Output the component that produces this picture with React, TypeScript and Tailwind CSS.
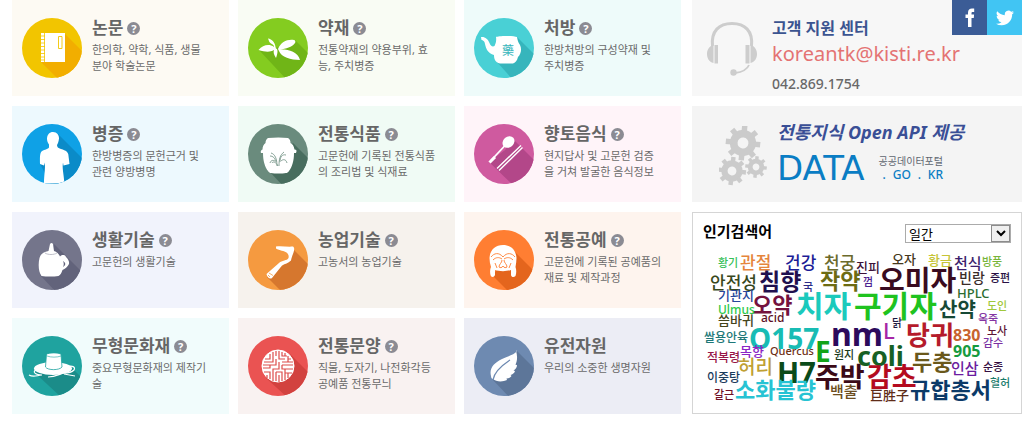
import { ReactNode } from "react";

type Topic = {
  title: string;
  lines: string[];
  card: string;
  disc: string;
  shade: string;
  shadow: string;
  help: boolean;
  art: ReactNode;
};

const topics: Topic[] = [
  {
    title: "논문",
    lines: ["한의학, 약학, 식품, 생물", "분야 학술논문"],
    card: "bg-[#fdfaf3]",
    disc: "#f2c500",
    shade: "#f2ae00",
    shadow: "M43 16 62 35V62H37L19 44Z",
    help: true,
    art: (
      <>
        <path fill="#fff" d="M19 15h24v29H19z" />
        <path stroke="#f2c500" fill="none" d="M22.5 15v29M18 18h5M18 21.500h5M18 25h5M18 28.500h5M18 32h5M18 35.500h5M18 39h5M18 42h5" strokeWidth=".8" />
        <path stroke="#f2c500" fill="none" strokeWidth=".9" d="M36.500 18.500h3.500v12h-3.500z" />
      </>
    ),
  },
  {
    title: "약재",
    lines: ["전통약재의 약용부위, 효", "능, 주치병증"],
    card: "bg-[#f9fcf4]",
    disc: "#84cc20",
    shade: "#70b517",
    shadow: "M11 32 28 30 47 22 62 37V62H39Z",
    help: true,
    art: (
      <path
        fill="#fff"
        d="M10.500 32C15 27 21 25.500 26 29c0-2-1-2.500-3-3.500-2-1-2-3-3-5 4 .5 7 4 7.500 8.500l.5 1.500c2 .5 2 4 0 9.500-2-3-3-6-2-8-4 2.500-9 2-15.500 0zM30 31c3-7 9-10 16-9 1 0 2 2 1 3-3 4-9 6-15 6.500C39 31 50 33 52 42c-9 0-19-3-21-9l-1-2z"
      />
    ),
  },
  {
    title: "처방",
    lines: ["한방처방의 구성약재 및", "주치병증"],
    card: "bg-[#eefbfa]",
    disc: "#49d0d5",
    shade: "#36b5bc",
    shadow: "M43 19 62 38V62H39L23 44Z",
    help: true,
    art: (
      <>
        <path
          fill="#fff"
          d="M7 19c4-.5 7 2 8.500 6 1 3 3 4 5 3 1.500-3 2-6 1.500-9 2-1.500 18-1.500 21 0 .5 3 1 5 3 8 2 4 1 9-2 12-1 4-3 6-5 6.500H26c-5-1-6-5-6-8.500-6-2-8-6-9-11-.5-3-2-4-3.500-4z"
        />
        <text x="34" y="37" fontSize="12" textAnchor="middle" fill="#36b5bc" fontFamily="Noto Sans CJK KR">
          藥
        </text>
      </>
    ),
  },
  {
    title: "병증",
    lines: ["한방병증의 문헌근거 및", "관련 양방병명"],
    card: "bg-[#edf9fe]",
    disc: "#0fa1e6",
    shade: "#0b8bc8",
    shadow: "M36 10 62 36V62H30L18 40Z",
    help: true,
    art: (
      <path
        fill="#fff"
        d="M31 8c4 0 6 3 6 6.500-.3 3-1 5-2 6.500 0 2 1 3 4 4 5 1.500 7.500 3 7.500 7l1 8-6 1.500-.5-3c-1 5 .5 10 1.500 21H22c0-9 1.500-14 .8-21l-.8 3-4-1.500c0-5-.5-10 1.500-12.500 1.500-1.500 6-2 7.500-4v-3c-1.500-2-2-4-2-6 .3-4 2.500-6.500 6-6.500z"
      />
    ),
  },
  {
    title: "전통식품",
    lines: ["고문헌에 기록된 전통식품", "의 조리법 및 식재료"],
    card: "bg-[#f0fbf5]",
    disc: "#6a8b7d",
    shade: "#486d5e",
    shadow: "M45 19 62 36V62H35L22 48Z",
    help: true,
    art: (
      <>
        <path
          fill="#fff"
          d="M20 14c7-.8 14-.8 20 0 2 1 2.500 3 2.500 5 2 1 3.500 3 4 6.500 2 0 2.500 1 1.500 3.500h-2c0 8-2 14-5 18-1 1.500-2 2-3 2-4 .8-11 .8-15 0-1 0-2-.5-3-2-3-4-5-10-5-18h-2c-.7-1.500 0-3 1.500-3.500 0-3 1-5 3-6.500 0-2 .7-4 2.500-5z"
        />
        <path
          fill="none"
          stroke="#6a8b7d"
          strokeWidth=".8"
          d="M29 42c0-7-2-12-6-13M28 38c-1-4-3-6-6-6M27 37c-2-1-4-1-5 2M31 42c0-7 1-11 5-14M32 38c0-5 2-8 6-7M33 37c2-2 5-2 6 2M30 42c-2-4-5-5-6-3"
        />
      </>
    ),
  },
  {
    title: "향토음식",
    lines: ["현지답사 및 고문헌 검증", "을 거쳐 발굴한 음식정보"],
    card: "bg-[#fff4f9]",
    disc: "#cf5a9f",
    shade: "#b34789",
    shadow: "M38 14 62 38V62H40L15 38 31 26 30 28Z",
    help: true,
    art: (
      <>
        <ellipse cx="34.500" cy="18" rx="6.500" ry="5.300" transform="rotate(-42 34.500 18)" fill="#fff" />
        <path d="M31 21.500 16.500 37" stroke="#fff" strokeWidth="1.800" />
        <path d="M21 33 15.500 38.500" stroke="#fff" strokeWidth="3" />
        <path d="M47 21.500 23 44.500M48.500 23.500 25 46.500" stroke="#fff" strokeWidth="1.400" />
      </>
    ),
  },
  {
    title: "생활기술",
    lines: ["고문헌의 생활기술"],
    card: "bg-[#f1f3fc]",
    disc: "#74758b",
    shade: "#62637b",
    shadow: "M32 14 62 44V62H34L18 45Z",
    help: true,
    art: (
      <>
        <path
          fill="#fff"
          fillRule="evenodd"
          d="M28 14c1-1.500 2-1.500 3 0l1 7c3 1 5 3 6 5.500 2-2 5-2 6 .5 2 2 3.500 4 3 7-1.500 3-4 5-6.500 6-1 3-2 5-4 6-5 .8-12 .8-17 0-3-4-3.500-12-2-18 1-4 4-6 9-7zM41 31c1 2 1 4 0 6 3-2 3-4 0-6z"
        />
        <path d="M23 23c3 2 9 2 12 0" fill="none" stroke="#a5a6b5" strokeWidth=".7" />
      </>
    ),
  },
  {
    title: "농업기술",
    lines: ["고농서의 농업기술"],
    card: "bg-[#f6f2ed]",
    disc: "#f59a40",
    shade: "#d6772e",
    shadow: "M46 20 62 36V62H34L19 47 42 30Z",
    help: true,
    art: (
      <>
        <path
          fill="#fff"
          d="M28 16.500c6-.5 12 .5 17 0 2 1.500 1 4 .5 6-1 3-2 5-2.500 8-3 3-6 3-9 5L24 48c-2 1.500-5-.5-5.500-4L31 33c3-3 8-2 9.500-5 .5-2 0-4-2-5.500-2-1.500-7-2-10.500-4z"
        />
        <path d="m21 43 4 2.500M20 45l2 2" stroke="#f59a40" strokeWidth=".8" />
      </>
    ),
  },
  {
    title: "전통공예",
    lines: ["고문헌에 기록된 공예품의", "재료 및 제작과정"],
    card: "bg-[#fef4ee]",
    disc: "#ff7e32",
    shade: "#e4651d",
    shadow: "M41 22 62 43V62H35L18 45Z",
    help: true,
    art: (
      <>
        <path
          fill="#fff"
          d="M29 15c8 0 13 5 13.500 13 0 3-.5 6-1 9 1 3 1 6 0 9-1.500 1.500-4 1.500-4.500-1v-5c-4 1.500-12 1.500-16 0v5c-.8 2.500-4 2.500-4.500 0-.7-3-.5-6 .5-8-1-3-1.500-6-1.500-9 .5-8 5.500-13 13.500-13z"
        />
        <path
          fill="none"
          stroke="#ff7e32"
          strokeWidth=".9"
          d="M17 27c3-4 8-5 12 0 4-5 9-4 12 0M19 30c3-3 6-3 9-1M39 30c-3-3-6-3-9-1M28 30c0 3-3 4-3 7 1 1 3 1 4-1 1 2 3 2 4 1 0-3-3-4-3-7M21 33l2 5M37 33l-2 5"
        />
      </>
    ),
  },
  {
    title: "무형문화재",
    lines: ["중요무형문화재의 제작기", "술"],
    card: "bg-[#f1fcfc]",
    disc: "#1fa39f",
    shade: "#1b8c89",
    shadow: "M49 31 62 44V62H40L12 36Z",
    help: true,
    art: (
      <>
        <ellipse cx="31" cy="32.500" rx="19" ry="6.500" fill="#fff" />
        <path fill="#fff" stroke="#1fa39f" strokeWidth=".8" d="m24.500 18-1 13c2 3.500 14 3.500 16.500 0l-1-13c-3-1.500-11-1.500-14.500 0z" />
        <path d="M25 20c4 1.500 10 1.500 14 0" fill="none" stroke="#1fa39f" strokeWidth=".6" />
        <path
          fill="none"
          stroke="#fff"
          strokeWidth="1.200"
          d="M45 31c5-2 9 0 7 3-2 2-6 3-10 3-5 1-8 4-16 4M15 33c-6 3-1 6 5 6-5 0-8 3-13 0M42 38l11 2"
        />
      </>
    ),
  },
  {
    title: "전통문양",
    lines: ["직물, 도자기, 나전화각등", "공예품 전통무늬"],
    card: "bg-[#f9f2f1]",
    disc: "#ea5352",
    shade: "#d2423f",
    shadow: "M42 18 62 38V62H40L18 42Z",
    help: true,
    art: (
      <>
        <circle cx="30" cy="30" r="16" fill="#fff" stroke="#fff" />
        <path
          fill="none"
          stroke="#dc4c4a"
          strokeWidth="1.200"
          d="M22 18v5h-5M25 16v10h-9M28 15v5M28 23v6H15M31 15v8h6M34 16v4h5M37 17v3M34 26h11M40 20v6M43 23h-3M31 26v7h-6v4M15 32h7v-3M16 36h6v7M25 34v11M28 36v9M19 39v3M28 36h6v9M31 39v7M34 29h11M34 29v4h11M37 33v11M37 37h7M40 37v5"
        />
      </>
    ),
  },
  {
    title: "유전자원",
    lines: ["우리의 소중한 생명자원"],
    card: "bg-[#ecedf5]",
    disc: "#6e8ab1",
    shade: "#5d7699",
    shadow: "M43 15 62 34V62H36L19 44Z",
    help: false,
    art: (
      <>
        <path
          fill="#fff"
          d="M43 15c-3 4-9 5-15 8-8 4-13 9-11 17 0 2 1 3 2 3 3 3 10 3 14 1l-.5-1.500c2 0 4-1 5-2.500l-1-1c2-.5 4-2 4.500-4l-1.500-.5c2-1 3.500-3 3.500-5.500l-1.500-.2c2-4 2-9 .5-14.300z"
        />
        <path d="M19 44c1-8 8-14 17-20" fill="none" stroke="#6e8ab1" strokeWidth="1.300" />
      </>
    ),
  },
];

type Word = [text: string, x: number, y: number, size: number, color: string, bold?: boolean];

// Left edge and vertical centre of each word inside the cloud panel.
const words: Word[] = [
  ["황기", 26, 50, 11, "#35c058"],
  ["관절", 48, 50, 17, "#e5853c"],
  ["건강", 93, 50, 17, "#1c1c96"],
  ["천궁", 132, 50, 17, "#6b6a2c"],
  ["진피", 164, 55, 13, "#3c1238"],
  ["오자", 200, 47, 13, "#46381c"],
  ["황금", 236, 48, 13, "#c6c437"],
  ["천식", 262, 51, 15, "#3c1f6c"],
  ["방풍", 290, 49, 11, "#78b53a"],
  ["안전성", 18, 70, 17, "#38481c"],
  ["침향", 67, 69, 23, "#1f104f", true],
  ["국", 111, 74, 11, "#2c2c88"],
  ["작약", 128, 68, 22, "#6d6b12", true],
  ["껌", 171, 69, 11, "#4c2290"],
  ["오미자", 187, 68, 28, "#390b20", true],
  ["빈랑", 267, 66, 14, "#3a2c28"],
  ["증편", 298, 65, 11, "#281044"],
  ["HPLC", 265, 81, 13, "#2b6c30"],
  ["기관지", 26, 83, 13, "#27479a"],
  ["오약", 60, 92, 22, "#74123e", true],
  ["치자", 104, 94, 30, "#1bcabc", true],
  ["구기자", 162, 94, 30, "#1fc31f", true],
  ["산약", 247, 98, 20, "#174936", true],
  ["도인", 295, 93, 11, "#a0c83b"],
  ["옥죽", 286, 106, 11, "#8535a3"],
  ["Ulmus", 26, 98, 12, "#2dc94a"],
  ["씀바귀", 26, 108, 13, "#45451c"],
  ["acid", 69, 106, 12, "#5c0f24"],
  ["닭", 200, 110, 11, "#1c1840"],
  ["쌀용안육", 12, 126, 12, "#1d7878"],
  ["O157", 57, 126, 28, "#18bcb4", true],
  ["nm", 139, 122, 32, "#2c0a5c", true],
  ["L", 191, 118, 22, "#a626a6"],
  ["당귀", 214, 123, 26, "#b51b2b", true],
  ["830", 261, 123, 16, "#c8642f", true],
  ["노사", 295, 118, 11, "#5e1636"],
  ["감수", 291, 130, 11, "#7b30a2"],
  ["905", 261, 139, 16, "#169b40", true],
  ["목향", 48, 139, 13, "#8b25c5"],
  ["Quercus", 78, 138, 11, "#6e3014"],
  ["E", 123, 139, 28, "#13a317", true],
  ["원지", 142, 142, 11, "#1c3b1c"],
  ["coli", 165, 143, 27, "#176024", true],
  ["두충", 220, 149, 22, "#6a581b", true],
  ["인삼", 259, 156, 15, "#6b1ca0"],
  ["순종", 291, 154, 11, "#340e40"],
  ["적복령", 15, 146, 12, "#971546"],
  ["허리", 46, 155, 19, "#bfa033"],
  ["H7", 85, 159, 29, "#0b4b19", true],
  ["주박", 123, 164, 27, "#3b0a17", true],
  ["감초", 175, 164, 27, "#b40b1f", true],
  ["이중탕", 15, 166, 12, "#1b3b5c"],
  ["갈근", 22, 182, 11, "#700f25"],
  ["소화불량", 43, 177, 22, "#27c3d3", true],
  ["백출", 138, 179, 15, "#6d4e20"],
  ["巨胜子", 178, 183, 13, "#5f2c18"],
  ["규합총서", 218, 177, 22, "#0b3a68", true],
  ["혈허", 298, 170, 11, "#1a7b6c"],
];

function Disc({ topic, id }: { topic: Topic; id: string }) {
  return (
    <svg viewBox="0 0 60 60" className="size-15 shrink-0" aria-hidden="true">
      <clipPath id={id}>
        <circle cx="30" cy="30" r="30" />
      </clipPath>
      <g clipPath={`url(#${id})`}>
        <path d="M0 0h60v60H0z" fill={topic.disc} />
        <path d={topic.shadow} fill={topic.shade} />
        {topic.art}
      </g>
    </svg>
  );
}

function TopicCard({ topic, id }: { topic: Topic; id: string }) {
  return (
    <article className={`flex h-24 items-start gap-2.5 pt-[18px] pl-2.5 ${topic.card}`}>
      <Disc topic={topic} id={id} />
      <div className="min-w-0">
        <div className="flex h-5 items-center gap-1">
          <h2 className="text-[17px] leading-5 font-bold whitespace-nowrap text-[#666]">{topic.title}</h2>
          {topic.help && (
            <button
              type="button"
              aria-label={`${topic.title} 도움말`}
              className="flex size-[13px] items-center justify-center rounded-full bg-[#8b8b93] text-[11px] leading-none font-bold text-white"
            >
              ?
            </button>
          )}
        </div>
        <p className="mt-1 text-[11px] leading-4 whitespace-nowrap text-[#6a6a6a]">
          {topic.lines.map((line) => (
            <span key={line} className="block">
              {line}
            </span>
          ))}
        </p>
      </div>
    </article>
  );
}

function Headset() {
  return (
    <svg viewBox="0 0 50 54" className="h-[54px] w-[50px] shrink-0" fill="#cdcdcd" aria-hidden="true">
      <path d="M5.500 24C4 9 12 1.500 25 1.500S46 9 44.500 24" fill="none" stroke="#cdcdcd" strokeWidth="3" />
      <path d="M6.500 23v18C2 40 0 36 0 32s2-8 6.500-9zM7.500 23H11v18.500H7.500zM43.500 23v18c4.500-1 6.500-5 6.500-9s-2-8-6.500-9zM38.500 23h4v18.500h-4z" />
      <path d="M42 43c-2 5-7 7-14 8" fill="none" stroke="#cdcdcd" strokeWidth="1.800" />
      <circle cx="26.500" cy="50.500" r="3.200" />
    </svg>
  );
}

function Gear({ x, y, r }: { x: number; y: number; r: number }) {
  return (
    <g transform={`translate(${x} ${y}) rotate(6)`}>
      <circle r={r * 0.58} fill="none" stroke="#cbcbcb" strokeWidth={r * 0.48} />
      {[0, 45, 90, 135, 180, 225, 270, 315].map((a) => (
        <rect key={a} x={-r * 0.17} y={-r * 1.08} width={r * 0.34} height={r * 0.4} fill="#cbcbcb" transform={`rotate(${a})`} />
      ))}
    </g>
  );
}

function SupportPanel() {
  return (
    <section className="flex h-24 items-start bg-[#f7f7f7] pl-[15px]">
      <div className="pt-[22px]">
        <Headset />
      </div>
      <div className="ml-[15px] min-w-0 flex-1 pt-[18px]">
        <h2 className="text-base leading-5 font-bold text-[#3b5490]">고객 지원 센터</h2>
        <a href="mailto:koreantk@kisti.re.kr" className="mt-0.5 block text-xl leading-7 text-[#e47373]">
          koreantk@kisti.re.kr
        </a>
        <p className="mt-1.5 text-sm leading-5 font-medium text-[#686868]">042.869.1754</p>
      </div>
      <nav className="-ml-[70px] flex">
        <a href="#facebook" aria-label="Facebook" className="flex size-[35px] items-center justify-center bg-[#3b5c96]">
          <svg viewBox="0 0 35 35" className="size-[35px]" fill="#fff" aria-hidden="true">
            <path d="M16 27v-9h-2.500v-3.500H16v-2c0-2.700 1.600-4 4-4h2.200V12h-1.500c-.9 0-1.200.4-1.200 1.200v1.300h2.600l-.3 3.500h-2.300v9z" />
          </svg>
        </a>
        <a href="#twitter" aria-label="Twitter" className="flex size-[35px] items-center justify-center bg-[#41c5f3]">
          <svg viewBox="0 0 24 24" className="size-[18px]" fill="#fff" aria-hidden="true">
            <path d="M23.950 4.570a10 10 0 0 1-2.820.770 4.960 4.960 0 0 0 2.160-2.720c-.950.550-2 .950-3.130 1.180a4.920 4.920 0 0 0-8.380 4.480C7.690 8.090 4.070 6.130 1.640 3.160a4.920 4.920 0 0 0 1.520 6.570 4.900 4.900 0 0 1-2.230-.610v.060a4.920 4.920 0 0 0 3.950 4.830 5 5 0 0 1-2.210.080 4.940 4.940 0 0 0 4.600 3.420A9.870 9.870 0 0 1 0 19.540a14 14 0 0 0 7.550 2.210c9.050 0 14-7.500 14-13.980 0-.210 0-.420-.020-.630a9.940 9.940 0 0 0 2.420-2.570z" />
          </svg>
        </a>
      </nav>
    </section>
  );
}

function OpenApiPanel() {
  return (
    <a href="#open-api" className="flex h-24 items-start bg-[#f4f4f4] pl-[27px]">
      <svg viewBox="0 0 48 60" className="mt-5 h-[60px] w-12 shrink-0" aria-hidden="true">
        <Gear x={24} y={17} r={16} />
        <Gear x={13} y={45} r={13} />
        <Gear x={37} y={41} r={10} />
      </svg>
      <div className="ml-2.5 pt-3.5">
        <p className="text-lg leading-6 font-bold whitespace-nowrap text-[#3a4f96] italic">전통지식 Open API 제공</p>
        <div className="mt-2 flex items-center gap-3.5 text-[#0a7dc4]">
          <span className="font-['DejaVu_Sans',sans-serif] text-[34px] leading-8">DATA</span>
          <span className="flex flex-col gap-0.5">
            <span className="text-[10px] leading-3 whitespace-nowrap text-[#5f6670]">공공데이터포털</span>
            <span className="flex justify-between pl-1 text-xs leading-3 font-medium">
              <span>.</span>
              <span>GO</span>
              <span>.</span>
              <span>KR</span>
            </span>
          </span>
        </div>
      </div>
    </a>
  );
}

function CloudPanel() {
  return (
    <section className="relative h-[202px] border border-[#d5d5d5] bg-white">
      <div className="flex items-start justify-between pt-2 pr-2.5 pl-2.5">
        <label htmlFor="period" className="text-[15px] leading-5 font-bold text-black">
          인기검색어
        </label>
        <div className="relative mt-[3px]">
          <select
            id="period"
            defaultValue="일간"
            className="block h-[19px] w-[106px] appearance-none rounded-none border border-[#ababab] bg-white pl-[3px] text-[13px] leading-4 text-black"
          >
            <option>일간</option>
            <option>주간</option>
            <option>월간</option>
          </select>
          <span className="pointer-events-none absolute top-px right-px flex h-[17px] w-[19px] items-center justify-center border border-[#8c8c8c] bg-[#efefef]">
            <svg viewBox="0 0 10 7" className="h-[7px] w-2.5" fill="none" stroke="#000" strokeWidth="2" aria-hidden="true">
              <path d="m1 1 4 4 4-4" />
            </svg>
          </span>
        </div>
      </div>
      <ul>
        {words.map(([text, x, y, size, color, bold]) => (
          <li
            key={text}
            className={`absolute -translate-y-1/2 leading-none whitespace-nowrap ${bold ? "font-bold" : "font-medium"}`}
            style={{ left: x - 1, top: y - 1, fontSize: size, color }}
          >
            {text}
          </li>
        ))}
      </ul>
    </section>
  );
}

export default function App() {
  return (
    <div className="flex items-start gap-[11px] bg-white pr-2 pl-3 font-['Noto_Sans','Noto_Sans_CJK_KR',sans-serif]">
      <main className="grid min-w-0 flex-1 grid-cols-3 gap-x-[9px] gap-y-2.5">
        {topics.map((topic, i) => (
          <TopicCard key={topic.title} topic={topic} id={`disc-${i}`} />
        ))}
      </main>
      <aside className="flex w-[330px] shrink-0 flex-col gap-2.5">
        <SupportPanel />
        <OpenApiPanel />
        <CloudPanel />
      </aside>
    </div>
  );
}
